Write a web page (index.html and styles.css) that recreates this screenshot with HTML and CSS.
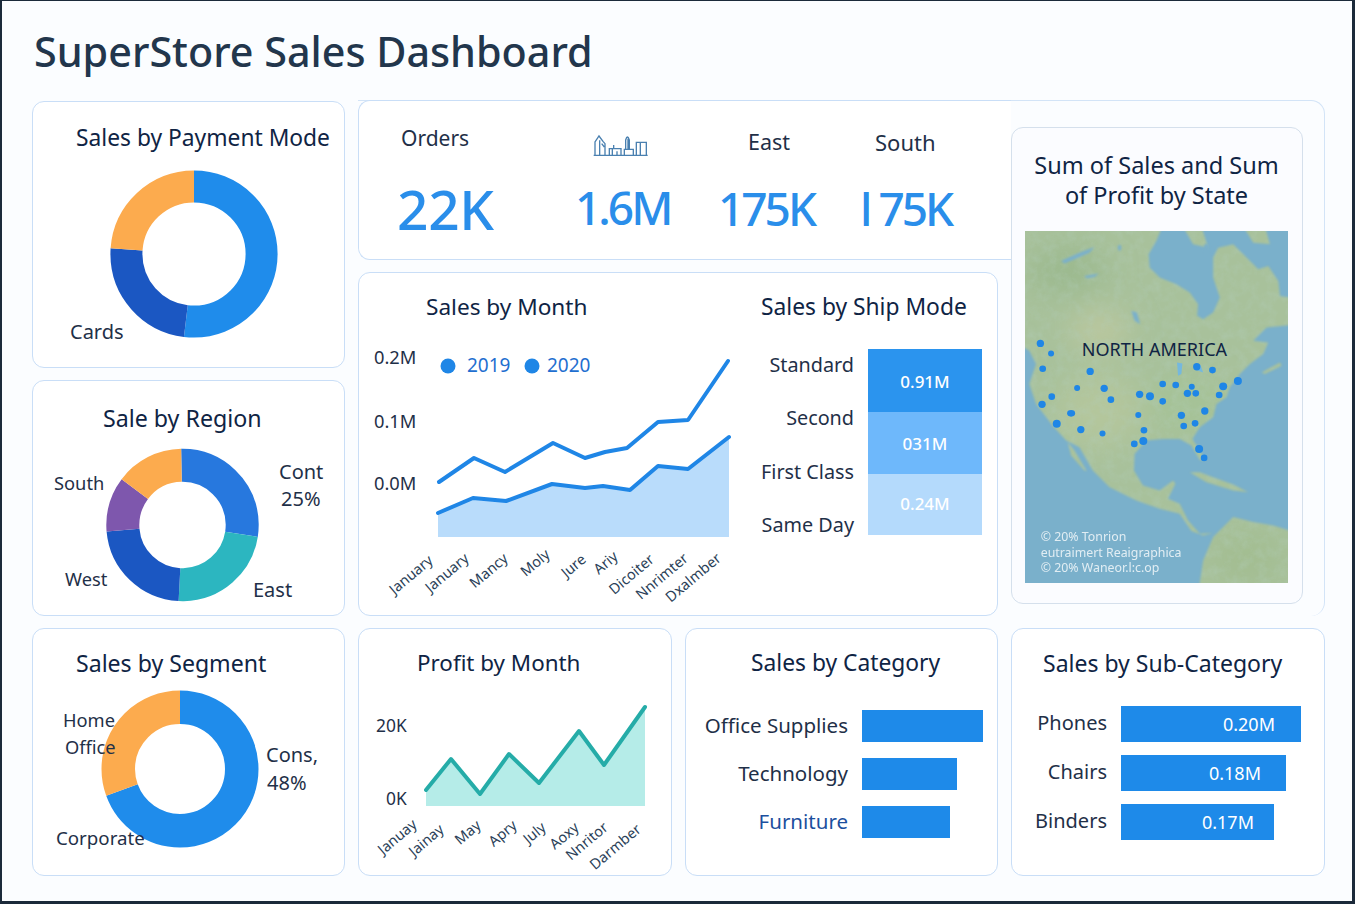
FILE: index.html
```html
<!DOCTYPE html>
<html lang="en">
<head>
<meta charset="utf-8">
<title>SuperStore Sales Dashboard</title>
<link rel="stylesheet" href="styles.css">
</head>
<body>
<main class="page">
  <h1 class="page-title">SuperStore Sales Dashboard</h1>
  <div class="grid">

    <section class="card payment">
      <h2 class="card-title payment-title">Sales by Payment Mode</h2>
      <svg class="chart" width="311" height="214" viewBox="33 153 311 214">
        <g transform="rotate(-90 194 254)" fill="none" stroke-width="32">
          <circle cx="194" cy="254" r="67.6" pathLength="360" stroke="#1f8ceb" stroke-dasharray="187 360"/>
          <circle cx="194" cy="254" r="67.6" pathLength="360" stroke="#1b57c2" stroke-dasharray="87 360" stroke-dashoffset="-187"/>
          <circle cx="194" cy="254" r="67.6" pathLength="360" stroke="#fcab4e" stroke-dasharray="86 360" stroke-dashoffset="-274"/>
        </g>
        <text class="lbl lbl-lg" x="70" y="339">Cards</text>
      </svg>
    </section>

    <div class="panel">
      <section class="kpis">
        <div class="kpi kpi-orders"><div class="kpi-label">Orders</div><div class="kpi-value kpi-value-lg">22K</div></div>
        <div class="kpi kpi-sales">
          <svg class="kpi-icon" width="55" height="23" viewBox="98 66 165 69" fill="none" stroke="#4a80b0" stroke-width="4">
            <path d="M100 130H262M104 130V90L116 72L128 88L134 95V130M118 85V130M124 95L132 105"/>
            <path d="M147 130V110H182V130M160 110V99M156 110V130M170 118V130"/>
            <path d="M192 130V112H219V130M196 112V84Q201 66 207 84V112M203 80V110"/>
            <path d="M228 130V91H258V130M240 91V130"/>
          </svg>
          <div class="kpi-value">1.6M</div>
        </div>
        <div class="kpi kpi-east"><div class="kpi-label">East</div><div class="kpi-value">175K</div></div>
        <div class="kpi kpi-south"><div class="kpi-label">South</div><div class="kpi-value">l 75K</div></div>
      </section>

      <section class="card month">
        <div class="month-left">
          <h2 class="card-title month-title">Sales by Month</h2>
          <svg class="chart" width="386" height="292" viewBox="359 322 386 292">
            <text class="lbl" x="374" y="364">0.2M</text>
            <text class="lbl" x="374" y="428">0.1M</text>
            <text class="lbl" x="374" y="490">0.0M</text>
            <circle cx="448" cy="366" r="7.5" fill="#1f86e6"/>
            <text class="legend" x="467" y="372">2019</text>
            <circle cx="532" cy="366" r="7.5" fill="#1f86e6"/>
            <text class="legend" x="547" y="372">2020</text>
            <path fill="#b9dcfb" d="M438 513L473 498L506 501L552 484L585 488L603 486L630 490L658 466L688 469L729 437V537H438Z"/>
            <path class="line-blue" d="M438 513L473 498L506 501L552 484L585 488L603 486L630 490L658 466L688 469L729 437"/>
            <path class="line-blue" d="M439 482L474 458L505 472L553 443L585 458L605 452L627 448L658 422L688 420L728 361"/>
            <g class="tick">
              <text x="434" y="562" transform="rotate(-40 434 562)">January</text>
              <text x="470" y="560" transform="rotate(-40 470 560)">January</text>
              <text x="509" y="560" transform="rotate(-40 509 560)">Mancy</text>
              <text x="551" y="556" transform="rotate(-40 551 556)">Moly</text>
              <text x="587" y="561" transform="rotate(-40 587 561)">Jure</text>
              <text x="619" y="558" transform="rotate(-40 619 558)">Ariy</text>
              <text x="655" y="561" transform="rotate(-40 655 561)">Dicoiter</text>
              <text x="689" y="560" transform="rotate(-40 689 560)">Nnrimter</text>
              <text x="722" y="560" transform="rotate(-40 722 560)">Dxalmber</text>
            </g>
          </svg>
        </div>
        <div class="month-right">
          <h2 class="card-title">Sales by Ship Mode</h2>
          <div class="ship">
            <div class="ship-labels">
              <span>Standard</span><span>Second</span><span>First Class</span><span>Same Day</span>
            </div>
            <div class="ship-bars">
              <div class="ship-bar ship-1">0.91M</div>
              <div class="ship-bar ship-2">031M</div>
              <div class="ship-bar ship-3">0.24M</div>
            </div>
          </div>
        </div>
      </section>

      <section class="map-card">
        <h2 class="card-title map-title">Sum of Sales and Sum of Profit by State</h2>
        <svg class="map" width="263" height="352" viewBox="77 360 787 1058" preserveAspectRatio="none">
          <defs>
            <filter id="soft"><feGaussianBlur stdDeviation="3"/></filter>
            <mask id="land" maskUnits="userSpaceOnUse" x="0" y="300" width="950" height="1200">
              <g fill="#fff" filter="url(#soft)">
                <path d="M40 330H495L470 390L447 430L450 470L480 500L530 520L570 545L595 580L592 615L610 625L640 605L660 560L640 500L640 440L655 410L700 400L740 440L775 475L805 465L835 510L840 555L900 565V640L800 650L760 690L805 695L790 730L750 760L720 790L690 830L680 860L650 880L640 920L600 950L578 985L600 1020L618 1050L600 1048L575 1005L540 985L490 985L440 990L405 1030L403 1080L430 1125L480 1140L520 1110L527 1120L505 1165L540 1180L565 1230L600 1270L640 1268L610 1275L575 1262L540 1210L480 1195L410 1170L330 1130L280 1080L240 1010L200 990L160 945L110 880L90 820L110 760L90 720L40 690Z"/>
                <path d="M205 995L225 1020L262 1082L255 1080L215 1035Z"/>
                <path d="M595 1450L610 1350L640 1280L700 1220L760 1235L820 1245L900 1270V1450Z"/>
                <path d="M570 1085L600 1085L640 1100L700 1122L745 1145L700 1140L620 1115Z"/>
                <path d="M540 330L600 330L625 410L580 400Z"/>
                <path d="M720 330H790L810 400L760 395Z"/>
                <path d="M785 785L840 755L845 765L795 790Z"/>
              </g>
            </mask>
            <filter id="blur-patch"><feGaussianBlur stdDeviation="45"/></filter>
            <filter id="grain">
              <feTurbulence type="fractalNoise" baseFrequency="0.035" numOctaves="4" seed="7"/>
              <feColorMatrix values="0 0 0 0 0.45  0 0 0 0 0.62  0 0 0 0 0.5  0 0 0 1.6 -0.62"/>
            </filter>
          </defs>
          <rect x="77" y="360" width="787" height="1058" fill="#7ab0cb"/>
          <g mask="url(#land)">
            <rect x="77" y="360" width="787" height="1058" fill="#a8c19b"/>
            <g filter="url(#blur-patch)">
              <ellipse cx="300" cy="660" rx="90" ry="60" fill="#bcc89f"/>
              <ellipse cx="300" cy="900" rx="130" ry="110" fill="#b4c69c"/>
              <ellipse cx="560" cy="880" rx="110" ry="80" fill="#a5c296"/>
              <ellipse cx="200" cy="480" rx="120" ry="70" fill="#9bb98e"/>
              <ellipse cx="740" cy="1340" rx="110" ry="80" fill="#a3bd91"/>
            </g>
            <rect x="77" y="360" width="787" height="1058" filter="url(#grain)" opacity=".4"/>
          </g>
          <g fill="#7ab0cb" filter="url(#soft)">
            <path d="M185 450L240 425L285 408L270 425L225 445L195 458Z"/>
            <path d="M255 495L298 488L285 498L260 502Z"/>
            <path d="M395 600L412 605L422 640L405 630Z"/>
            <ellipse cx="620" cy="410" rx="8" ry="12"/>
            <ellipse cx="360" cy="410" rx="5" ry="9"/>
          </g>
          <g fill="#75b8de">
            <path d="M532 755L548 758L545 790L535 795Z"/>
            <path d="M582 760L602 762L610 785L590 778Z"/>
          </g>
          <g fill="#1f86e6">
            <circle cx="123" cy="698" r="11"/><circle cx="155" cy="728" r="9"/><circle cx="130" cy="774" r="10"/><circle cx="272" cy="782" r="11"/>
            <circle cx="233" cy="832" r="9"/><circle cx="314" cy="833" r="11"/><circle cx="334" cy="867" r="10"/><circle cx="157" cy="858" r="10"/>
            <circle cx="128" cy="881" r="11"/><ellipse cx="215" cy="908" rx="12" ry="10"/><circle cx="172" cy="939" r="12"/><circle cx="244" cy="957" r="11"/>
            <circle cx="309" cy="969" r="9"/><circle cx="420" cy="851" r="11"/><circle cx="451" cy="857" r="12"/><circle cx="489" cy="820" r="10"/>
            <circle cx="528" cy="823" r="10"/><circle cx="489" cy="872" r="10"/><circle cx="416" cy="913" r="9"/><circle cx="433" cy="959" r="10"/>
            <circle cx="431" cy="991" r="12"/><circle cx="404" cy="1000" r="10"/><circle cx="545" cy="914" r="11"/><circle cx="552" cy="946" r="10"/>
            <circle cx="586" cy="938" r="10"/><circle cx="615" cy="901" r="11"/><circle cx="563" cy="848" r="11"/><circle cx="576" cy="828" r="9"/>
            <circle cx="588" cy="848" r="10"/><circle cx="591" cy="768" r="11"/><circle cx="638" cy="778" r="10"/><circle cx="670" cy="827" r="12"/>
            <circle cx="714" cy="811" r="12"/><circle cx="658" cy="853" r="10"/><circle cx="598" cy="1015" r="12"/><circle cx="613" cy="1042" r="10"/>
          </g>
          <text class="map-name" x="247" y="737">NORTH AMERICA</text>
          <text class="map-note" x="124" y="1292">© 20% Tonrion</text>
          <text class="map-note" x="124" y="1339">eutraimert Reaigraphica</text>
          <text class="map-note" x="124" y="1384">© 20% Waneor.l:c.op</text>
        </svg>
      </section>
    </div>

    <section class="card region">
      <h2 class="card-title region-title">Sale by Region</h2>
      <svg class="chart" width="311" height="181" viewBox="33 433 311 181">
        <g transform="rotate(-91 182.5 525)" fill="none" stroke-width="33">
          <circle cx="182.5" cy="525" r="59.7" pathLength="360" stroke="#2778de" stroke-dasharray="100 360"/>
          <circle cx="182.5" cy="525" r="59.7" pathLength="360" stroke="#2cb6c0" stroke-dasharray="84 360" stroke-dashoffset="-100"/>
          <circle cx="182.5" cy="525" r="59.7" pathLength="360" stroke="#1b57c2" stroke-dasharray="82 360" stroke-dashoffset="-184"/>
          <circle cx="182.5" cy="525" r="59.7" pathLength="360" stroke="#7e57ad" stroke-dasharray="42 360" stroke-dashoffset="-266"/>
          <circle cx="182.5" cy="525" r="59.7" pathLength="360" stroke="#fcab4e" stroke-dasharray="52 360" stroke-dashoffset="-308"/>
        </g>
        <text class="lbl" x="54" y="490">South</text>
        <text class="lbl lbl-md" x="279" y="479">Cont</text>
        <text class="lbl lbl-md" x="281" y="506">25%</text>
        <text class="lbl" x="65" y="586">West</text>
        <text class="lbl lbl-md" x="253" y="597">East</text>
      </svg>
    </section>

    <section class="card segment">
      <h2 class="card-title segment-title">Sales by Segment</h2>
      <svg class="chart" width="311" height="196" viewBox="33 678 311 196">
        <g transform="rotate(-90 180 769)" fill="none" stroke-width="33.5">
          <circle cx="180" cy="769" r="61.75" pathLength="360" stroke="#1f8ceb" stroke-dasharray="250 360"/>
          <circle cx="180" cy="769" r="61.75" pathLength="360" stroke="#fcab4e" stroke-dasharray="110 360" stroke-dashoffset="-250"/>
        </g>
        <text class="lbl" x="63" y="727">Home</text>
        <text class="lbl" x="65" y="754">Office</text>
        <text class="lbl lbl-md" x="266" y="762">Cons,</text>
        <text class="lbl lbl-md" x="267" y="790">48%</text>
        <text class="lbl lbl-wide" x="56" y="845">Corporate</text>
      </svg>
    </section>

    <section class="card profit">
      <h2 class="card-title profit-title">Profit by Month</h2>
      <svg class="chart" width="312" height="196" viewBox="359 678 312 196">
        <text class="lbl lbl-sm" x="376" y="732">20K</text>
        <text class="lbl lbl-sm" x="386" y="805">0K</text>
        <path fill="#b5ece8" d="M426 790L451 759L480 794L509 754L539 783L579 731L604 765L645 707V806H426Z"/>
        <path class="line-teal" d="M426 790L451 759L480 794L509 754L539 783L579 731L604 765L645 707"/>
        <g class="tick">
          <text x="418" y="826" transform="rotate(-40 418 826)">Januay</text>
          <text x="445" y="831" transform="rotate(-40 445 831)">Jainay</text>
          <text x="482" y="827" transform="rotate(-40 482 827)">May</text>
          <text x="518" y="827" transform="rotate(-40 518 827)">Apry</text>
          <text x="547" y="829" transform="rotate(-40 547 829)">July</text>
          <text x="580" y="829" transform="rotate(-40 580 829)">Aoxy</text>
          <text x="609" y="829" transform="rotate(-40 609 829)">Nnritor</text>
          <text x="642" y="831" transform="rotate(-40 642 831)">Darmber</text>
        </g>
      </svg>
    </section>

    <section class="card category">
      <h2 class="card-title category-title">Sales by Category</h2>
      <div class="hbars hbars-cat">
        <div class="hrow"><span class="hlabel">Office Supplies</span><div class="hbar cat-1"></div></div>
        <div class="hrow"><span class="hlabel">Technology</span><div class="hbar cat-2"></div></div>
        <div class="hrow"><span class="hlabel hlabel-accent">Furniture</span><div class="hbar cat-3"></div></div>
      </div>
    </section>

    <section class="card subcat">
      <h2 class="card-title subcat-title">Sales by Sub-Category</h2>
      <div class="hbars hbars-sub">
        <div class="hrow"><span class="hlabel">Phones</span><div class="hbar sub-1">0.20M</div></div>
        <div class="hrow"><span class="hlabel">Chairs</span><div class="hbar sub-2">0.18M</div></div>
        <div class="hrow"><span class="hlabel">Binders</span><div class="hbar sub-3">0.17M</div></div>
      </div>
    </section>

  </div>
</main>
</body>
</html>
```
FILE: styles.css
```css
* { box-sizing: border-box; }
html, body { margin: 0; padding: 0; }
body {
  width: 1355px;
  height: 904px;
  overflow: hidden;
  font-family: "Noto Sans", "Open Sans", sans-serif;
  color: #1f3048;
  background: #1b2a3a;
}
.page {
  width: 1355px;
  height: 904px;
  border: solid #1b2a3a;
  border-width: 1px 3px 3px 2px;
  background: #fbfdff;
  padding: 0 0 0 30px;
}
.page-title {
  margin: 0;
  padding-top: 20px;
  height: 99px;
  font-size: 41.3px;
  line-height: 60px;
  font-weight: 500;
  color: #22364c;
  margin-left: 2px;
}
.grid {
  display: grid;
  grid-template-columns: 313px 314px 313px 314px;
  grid-template-rows: 268px 236px 248px;
  column-gap: 13px;
  row-gap: 12px;
}
.card {
  background: #fff;
  border: 1px solid #c9def7;
  border-radius: 12px;
  min-width: 0;
}
.card-title {
  margin: 0;
  font-size: 22.8px;
  line-height: 30px;
  font-weight: 400;
  color: #0f2444;
  white-space: nowrap;
}
.chart { display: block; overflow: visible; }

.payment { margin-top: 1px; padding-top: 21px; }
.payment-title { padding-left: 43px; }
.region { padding-top: 22px; grid-column: 1; grid-row: 2; }
.region-title { padding-left: 70px; font-size: 23.2px; }
.segment { padding-top: 19px; grid-column: 1; grid-row: 3; }
.segment-title { padding-left: 43px; font-size: 23.1px; }
.profit { padding-top: 19px; }
.profit-title { padding-left: 58px; font-size: 22.4px; }
.category { padding-top: 19px; }
.category-title { padding-left: 65px; }
.subcat { padding-top: 19px; }
.subcat-title { padding-left: 31px; font-size: 23px; }

.lbl { font-size: 18.3px; fill: #1f3048; }
.lbl-md { font-size: 20px; }
.lbl-lg { font-size: 20px; }
.lbl-sm { font-size: 17.4px; }
.lbl-wide { font-size: 18.7px; }
.legend { font-size: 19px; fill: #1f6fd0; }
.tick text { font-size: 14.5px; fill: #2b3f58; text-anchor: end; }
.line-blue { fill: none; stroke: #1f86e6; stroke-width: 4; stroke-linejoin: round; stroke-linecap: round; }
.line-teal { fill: none; stroke: #25aca8; stroke-width: 4; stroke-linejoin: round; stroke-linecap: round; }

.panel {
  grid-column: 2 / 5;
  grid-row: 1 / 3;
  display: grid;
  grid-template-columns: 640px 13px 292px 1fr;
  grid-template-rows: 159px 12px 1fr;
  border: solid #d3e4f7;
  border-width: 1px 1px 0 0;
  border-radius: 0 14px 14px 0;
}
.kpis {
  grid-column: 1 / 3;
  grid-row: 1;
  margin-top: -1px;
  background: #fff;
  border: 1px solid #c9def7;
  border-right: 0;
  border-radius: 12px 0 0 12px;
  display: grid;
  grid-template-columns: 178px 143px 142px 1fr;
  padding-left: 38px;
}
.kpi-label { font-size: 21.5px; line-height: 30px; color: #1f3048; white-space: nowrap; }
.kpi-value {
  font-size: 46px;
  font-weight: 500;
  line-height: 60px;
  letter-spacing: -3px;
  color: #2a8eea;
  white-space: nowrap;
}
.kpi-value-lg { font-size: 55px; letter-spacing: -.3px; line-height: 64px; }
.kpi-orders { padding-top: 22px; }
.kpi-orders .kpi-label { padding-left: 4px; margin-bottom: 24px; font-size: 21px; }
.kpi-sales { padding-top: 33px; }
.kpi-icon { display: block; margin-left: 18px; margin-bottom: 20px; }
.kpi-east, .kpi-south { padding-top: 26px; }
.kpi-east .kpi-label, .kpi-south .kpi-label { margin-bottom: 21px; }
.kpi-east .kpi-label { padding-left: 30px; }
.kpi-south .kpi-label { padding-left: 15px; font-size: 22px; }

.month {
  grid-column: 1;
  grid-row: 3;
  display: flex;
  padding-top: 19px;
  border-radius: 12px;
}
.month-left { width: 386px; flex: none; }
.month-title { padding-left: 67px; font-size: 22.6px; }
.month-right { flex: 1; padding-left: 16px; }
.ship { display: flex; gap: 14px; margin-top: 27px; }
.ship-labels {
  width: 93px;
  flex: none;
  display: flex;
  flex-direction: column;
  gap: 29.4px;
  padding-top: 4px;
  align-items: flex-end;
  font-size: 19.8px;
  line-height: 24px;
  white-space: nowrap;
}
.ship-bars { width: 114px; flex: none; }
.ship-bar {
  display: flex;
  align-items: center;
  justify-content: center;
  color: #fff;
  font-size: 17px;
  font-weight: 500;
}
.ship-1 { height: 63px; background: #2b94ee; padding-top: 2px; }
.ship-2 { height: 62px; background: #6eb8fb; }
.ship-3 { height: 61px; background: #b4dafc; padding-bottom: 3px; }

.map-card {
  grid-column: 3;
  grid-row: 1 / 4;
  margin: 26px 0 12px;
  padding: 22px 14px 0 13px;
  background: #fbfcff;
  border: 1px solid #d5e0ec;
  border-radius: 12px;
  position: relative;
}
.map-title { text-align: center; white-space: normal; font-size: 23.5px; padding: 0 6px; }
.map { display: block; margin-top: 21px; }
.map-name { font-size: 54px; fill: #0f2444; }
.map-note { font-size: 37px; fill: #fff; opacity: .78; }

.hbars { display: flex; flex-direction: column; }
.hrow { display: flex; align-items: center; gap: 14px; }
.hlabel { flex: none; text-align: right; white-space: nowrap; color: #1f3048; }
.hlabel-accent { color: #1c4f9e; }
.hbar {
  background: #1e8ae9;
  color: #fff;
  text-align: right;
  font-size: 18px;
}
.hbars-cat { margin-top: 32px; gap: 16px; }
.hbars-cat .hlabel { width: 162px; font-size: 20.5px; margin-bottom: 2px; }
.hbars-cat .hbar { height: 32px; }
.cat-1 { width: 121px; }
.cat-2 { width: 95px; }
.cat-3 { width: 88px; }
.hbars-sub { margin-top: 28px; gap: 13px; }
.hbars-sub .hlabel { width: 95px; font-size: 20px; margin-bottom: 4px; }
.hbars-sub .hbar { height: 36px; line-height: 37px; }
.sub-1 { width: 180px; padding-right: 26px; }
.sub-2 { width: 165px; padding-right: 25px; }
.sub-3 { width: 153px; padding-right: 20px; }
```
